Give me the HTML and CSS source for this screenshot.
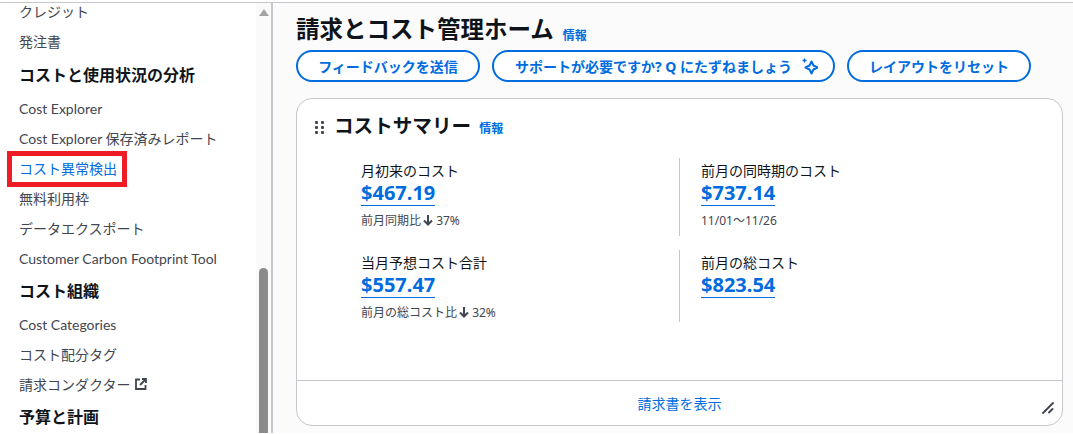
FILE: index.html
```html
<!DOCTYPE html>
<html lang="ja">
<head>
    <meta charset="utf-8">
    <title>請求とコスト管理ホーム</title>
    <link rel="stylesheet" href="styles.css">
</head>
<body>
    <div class="container">
        <aside class="sidebar">
            <nav class="nav">
                <a class="nav-item">クレジット</a>
                <a class="nav-item">発注書</a>
                <h3 class="nav-head first">コストと使用状況の分析</h3>
                <a class="nav-item">Cost Explorer</a>
                <a class="nav-item">Cost Explorer 保存済みレポート</a>
                <a class="nav-item active">コスト異常検出</a>
                <a class="nav-item">無料利用枠</a>
                <a class="nav-item">データエクスポート</a>
                <a class="nav-item">Customer Carbon Footprint Tool</a>
                <h3 class="nav-head">コスト組織</h3>
                <a class="nav-item">Cost Categories</a>
                <a class="nav-item">コスト配分タグ</a>
                <a class="nav-item">請求コンダクター
                    <svg class="ext-icon" width="12" height="12" viewBox="0 0 12 12" fill="none" stroke="#414750" stroke-width="1.8">
                        <path d="M5 1.500H1v9.500h9.500V7"/>
                        <path d="M5 7l6-6M7 1h4v4"/>
                    </svg>
                </a>
                <h3 class="nav-head">予算と計画</h3>
            </nav>
            <div class="scrollbar">
                <span class="scroll-arrow"></span>
                <span class="scroll-thumb"></span>
            </div>
        </aside>

        <main class="content">
            <div class="title-row">
                <h1>請求とコスト管理ホーム</h1>
                <a class="info">情報</a>
            </div>
            <div class="actions">
                <button class="btn btn-feedback">フィードバックを送信</button>
                <button class="btn btn-support">サポートが必要ですか? Q にたずねましょう
                    <svg class="spark" width="17" height="17" viewBox="0 0 17 17" fill="none" stroke="#006ce0" stroke-width="2">
                        <path d="M10.500 3.500l2 4 4 2-4 2-2 4-2-4-4-2 4-2z" stroke-linejoin="round"/>
                        <path d="M3.500 .5v4M1.500 2.500h4" stroke-width="1.400"/>
                    </svg>
                </button>
                <button class="btn btn-reset">レイアウトをリセット</button>
            </div>

            <section class="card">
                <div class="card-head">
                    <svg class="grip" width="9" height="14" viewBox="0 0 9 14" fill="#414750">
                        <rect x="0" y="0" width="3" height="3" rx="1"/><rect x="6" y="0" width="3" height="3" rx="1"/>
                        <rect x="0" y="5" width="3" height="3" rx="1"/><rect x="6" y="5" width="3" height="3" rx="1"/>
                        <rect x="0" y="10" width="3" height="3" rx="1"/><rect x="6" y="10" width="3" height="3" rx="1"/>
                    </svg>
                    <h2>コストサマリー</h2>
                    <a class="info">情報</a>
                </div>
                <div class="stats">
                    <div class="stat">
                        <div class="stat-label">月初来のコスト</div>
                        <a class="stat-value">$467.19</a>
                        <div class="stat-note">前月同期比<svg class="down" width="10" height="11" viewBox="0 0 10 11" fill="none" stroke="#424650" stroke-width="2"><path d="M5 0v9M1 5.500l4 4 4-4"/></svg> 37%</div>
                    </div>
                    <div class="stat stat-right">
                        <div class="stat-label">前月の同時期のコスト</div>
                        <a class="stat-value">$737.14</a>
                        <div class="stat-note">11/01～11/26</div>
                    </div>
                    <div class="stat">
                        <div class="stat-label">当月予想コスト合計</div>
                        <a class="stat-value">$557.47</a>
                        <div class="stat-note">前月の総コスト比<svg class="down" width="10" height="11" viewBox="0 0 10 11" fill="none" stroke="#424650" stroke-width="2"><path d="M5 0v9M1 5.500l4 4 4-4"/></svg> 32%</div>
                    </div>
                    <div class="stat stat-right">
                        <div class="stat-label">前月の総コスト</div>
                        <a class="stat-value">$823.54</a>
                    </div>
                </div>
                <div class="card-foot">
                    <a>請求書を表示</a>
                    <svg class="resize" width="12" height="12" viewBox="0 0 12 12" fill="none" stroke="#414750" stroke-width="1.800" stroke-linecap="round">
                        <path d="M1 11L11 1M7 10.500l3.500-3.500"/>
                    </svg>
                </div>
            </section>
        </main>
    </div>
</body>
</html>
```

FILE: styles.css
```css
html, body {
    margin: 0;
    padding: 0;
    height: 100%;
    overflow: hidden;
}
body {
    font-family: "Noto Sans", "Noto Sans CJK JP", sans-serif;
    font-size: 14px;
    color: #0f141a;
    background-color: #ffffff;
}
.container {
    display: flex;
    height: 431px;
    margin-top: 2px;
    border-top: 1px solid #c6c6cd;
    box-sizing: border-box;
}

/* left navigation */
.sidebar {
    width: 271px;
    flex: none;
    display: flex;
    justify-content: space-between;
    border-right: 2px solid #c6c6cd;
    background-color: #ffffff;
    overflow: hidden;
}
.nav {
    margin-top: -6px;
    padding-left: 19px;
    display: flex;
    flex-direction: column;
    white-space: nowrap;
    font-family: "Lato", "Noto Sans CJK JP", sans-serif;
}
.nav-item {
    height: 30px;
    line-height: 30px;
    font-size: 14px;
    color: #424650;
    display: block;
    flex: none;
}
.nav-item.active {
    width: max-content;
    color: #006ce0;
    border: 5px solid #ee1c25;
    height: 26px;
    line-height: 26px;
    margin: -3px 0 -3px -12px;
    padding: 0 5px 0 7px;
}
.nav-head {
    margin: 0;
    height: 36px;
    line-height: 34px;
    font-size: 16px;
    font-weight: 700;
    color: #0f141a;
    flex: none;
}
.nav-head.first {
    margin-top: 1px;
}
.ext-icon {
    margin-left: 1px;
    vertical-align: 0;
}

/* fake scrollbar */
.scrollbar {
    width: 15px;
    flex: none;
    background-color: #fafafa;
    display: flex;
    flex-direction: column;
    align-items: center;
    padding-top: 6px;
    box-sizing: border-box;
}
.scroll-arrow {
    width: 0;
    height: 0;
    border-left: 5px solid transparent;
    border-right: 5px solid transparent;
    border-bottom: 7px solid #a3a3a3;
}
.scroll-thumb {
    display: block;
    width: 9px;
    height: 180px;
    margin-top: 252px;
    border-radius: 5px 5px 0 0;
    background-color: #8b8b8b;
}

/* main area */
.content {
    flex: 1;
    min-width: 0;
    background-color: #fbfbfb;
    padding: 9px 10px 0 23px;
}
.title-row {
    display: flex;
    align-items: flex-end;
    gap: 9px;
    height: 34px;
}
.title-row .info {
    margin-bottom: 1px;
}
h1 {
    margin: 0;
    font-size: 23.5px;
    line-height: 34px;
    font-weight: 700;
}
.info {
    font-size: 12px;
    font-weight: 700;
    color: #006ce0;
    line-height: 18px;
}
.actions {
    display: flex;
    gap: 12px;
    margin-top: 4px;
}
.btn {
    font-family: inherit;
    height: 32px;
    padding: 0;
    box-sizing: border-box;
    border: 2px solid #006ce0;
    border-radius: 16px;
    background-color: #ffffff;
    color: #006ce0;
    font-size: 14px;
    font-weight: 700;
    display: flex;
    align-items: center;
    justify-content: center;
}
.btn-feedback { width: 184px; }
.btn-support { width: 343px; gap: 9px; padding-left: 6px; }
.btn-reset { width: 184px; }

.card {
    margin-top: 16px;
    height: 328px;
    box-sizing: border-box;
    background-color: #ffffff;
    border: 1px solid #c6c6cd;
    border-radius: 16px;
    display: flex;
    flex-direction: column;
}
.card-head {
    display: flex;
    align-items: center;
    padding: 12px 0 0 18px;
    height: 30px;
}
.grip {
    margin-top: 3px;
}
.card-head h2 {
    margin: 0 8px 0 10px;
    font-size: 19.6px;
    line-height: 30px;
    font-weight: 700;
}
.card-head .info {
    margin-top: 5px;
}
.stats {
    display: grid;
    grid-template-columns: 318px 1fr;
    grid-template-rows: 78px 72px;
    row-gap: 14px;
    margin: 17px 0 0 64px;
    flex: 1;
    align-content: start;
}
.stat {
    padding-top: 2px;
    box-sizing: border-box;
}
.stat-right {
    border-left: 1px solid #c6c6cd;
    padding-left: 21px;
}
.stat-label {
    font-size: 14px;
    line-height: 21px;
    color: #0f141a;
}
.stat-value {
    display: inline-block;
    font-size: 20px;
    line-height: 24px;
    font-weight: 700;
    color: #006ce0;
    border-bottom: 1px solid #006ce0;
}
.stat-note {
    font-size: 12px;
    line-height: 16px;
    margin-top: 7px;
    color: #424650;
}
.down {
    margin-left: 2px;
    vertical-align: -1px;
}
.card-foot {
    position: relative;
    height: 44px;
    border-top: 1px solid #c6c6cd;
    display: flex;
    align-items: center;
    justify-content: center;
    font-size: 14px;
    color: #006ce0;
}
.resize {
    position: absolute;
    right: 8px;
    bottom: 11px;
}
```
